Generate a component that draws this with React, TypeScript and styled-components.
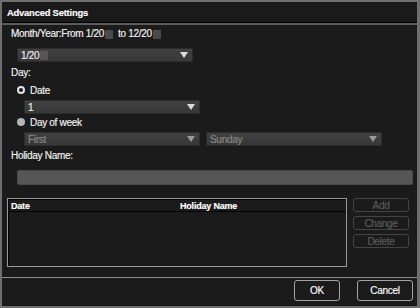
import React from "react";
import styled, { createGlobalStyle } from "styled-components";

const Global = createGlobalStyle`
  html, body { margin: 0; padding: 0; background: #1b1b1b; }
  body { font-family: "Liberation Sans", Arial, sans-serif; }
  * { box-sizing: border-box; }
`;

const Window = styled.div`
  width: 420px;
  height: 308px;
  display: flex;
  flex-direction: column;
  background: #1b1b1b;
  border-style: solid;
  border-color: #6f6f6f;
  border-width: 2px 3px 2px 2px;
  color: #f4f4f4;
  font-size: 10px;
  letter-spacing: -0.3px;
  -webkit-text-stroke: 0.15px currentColor;
`;

const TitleBar = styled.div`
  height: 21px;
  display: flex;
  align-items: center;
  padding-left: 5px;
  font-weight: bold;
  font-size: 9.4px;
  letter-spacing: -0.2px;
  color: #ffffff;
  background: #1a1a1a;
  border-bottom: 1px solid #000;
`;

const TitleRule = styled.div`
  height: 2px;
  background: #5d5d5d;
`;

const Body = styled.div`
  flex: 1;
  display: flex;
  flex-direction: column;
  padding: 0 4px 0 5px;
`;

const Label = styled.div<{ $mt: number }>`
  margin-top: ${(p) => p.$mt}px;
  padding-left: 4px;
  height: 12px;
  line-height: 12px;
  display: flex;
  align-items: center;
  white-space: pre;
`;

const Mask = styled.span<{ $tone?: string }>`
  display: inline-block;
  width: 8px;
  height: 9px;
  background: ${(p) => p.$tone || "#4a4a4a"};
  margin-left: 1px;
  -webkit-text-stroke: 0;
`;

const Select = styled.div<{ $w: number; $disabled?: boolean; $ml?: number; $mt?: number }>`
  width: ${(p) => p.$w}px;
  height: 14px;
  margin-left: ${(p) => p.$ml ?? 0}px;
  margin-top: ${(p) => p.$mt ?? 0}px;
  display: flex;
  align-items: center;
  justify-content: space-between;
  padding: 0 4px 0 3px;
  background: linear-gradient(#414141, #383838);
  border: 1px solid #2c2c2c;
  border-radius: 1px;
  color: ${(p) => (p.$disabled ? "#8a8a8a" : "#f0f0f0")};
  flex-shrink: 0;
`;

const Arrow = styled.span<{ $disabled?: boolean }>`
  width: 0;
  height: 0;
  border-left: 4px solid transparent;
  border-right: 4px solid transparent;
  border-top: 6px solid ${(p) => (p.$disabled ? "#9a9a9a" : "#dcdcdc")};
`;

const RadioRow = styled.div<{ $mt: number }>`
  margin-top: ${(p) => p.$mt}px;
  margin-left: 10px;
  height: 12px;
  display: flex;
  align-items: center;
  gap: 5px;
`;

const Radio = styled.span<{ $checked?: boolean }>`
  width: 8px;
  height: 8px;
  border-radius: 50%;
  ${(p) =>
    p.$checked
      ? "border: 2px solid #e6e6e6; background: #1b1b1b;"
      : "background: #b4b4b4;"}
`;

const Row = styled.div<{ $mt: number; $ml?: number; $gap: number }>`
  display: flex;
  margin-top: ${(p) => p.$mt}px;
  margin-left: ${(p) => p.$ml ?? 0}px;
  gap: ${(p) => p.$gap}px;
`;

const TextInput = styled.div`
  margin-top: 8px;
  margin-left: 10px;
  height: 15px;
  background: #565656;
  border: 1px solid #4a4a4a;
  border-radius: 2px;
`;

const Table = styled.div`
  width: 340px;
  height: 69px;
  border: 1px solid #9a9a9a;
  display: flex;
  flex-direction: column;
`;

const TableHead = styled.div`
  display: grid;
  grid-template-columns: 169px 1fr;
  height: 13px;
  align-items: center;
  font-weight: bold;
  font-size: 9px;
  letter-spacing: -0.2px;
  padding-left: 2px;
  border-top: 1px solid #000;
  border-left: 1px solid #000;
  border-bottom: 1px solid #000;
  color: #fff;
`;

const TableBody = styled.div`
  flex: 1;
  border-left: 1px solid #000;
`;

const SideButtons = styled.div`
  display: flex;
  flex-direction: column;
  gap: 4px;
  width: 56px;
`;

const SmallButton = styled.div`
  height: 14px;
  border: 1px solid #444;
  border-radius: 3px;
  color: #5c5c5c;
  display: flex;
  align-items: center;
  justify-content: center;
`;

const Footer = styled.div`
  margin-top: auto;
  border-top: 1px solid #8c8c8c;
  display: flex;
  justify-content: flex-end;
  gap: 17px;
  padding: 2px 4px 5px 0;
`;

const MainButton = styled.div<{ $w: number }>`
  width: ${(p) => p.$w}px;
  height: 21px;
  border: 1px solid #a4a4a4;
  border-radius: 3px;
  display: flex;
  align-items: center;
  justify-content: center;
  color: #fff;
  font-size: 10px;
`;

export default function App() {
  return (
    <>
      <Global />
      <Window>
        <TitleBar>Advanced Settings</TitleBar>
        <TitleRule />
        <Body>
          <Label $mt={3}>
            Month/Year:From 1/20<Mask />
            {"  to 12/20"}
            <Mask />
          </Label>
          <Select $w={176} $ml={10} $mt={8}>
            <span style={{ display: "flex", alignItems: "center" }}>
              1/20<Mask $tone="#555" />
            </span>
            <Arrow />
          </Select>
          <Label $mt={5}>Day:</Label>
          <RadioRow $mt={5}>
            <Radio $checked />
            <span>Date</span>
          </RadioRow>
          <Select $w={176} $ml={17} $mt={4}>
            <span>1</span>
            <Arrow />
          </Select>
          <RadioRow $mt={2}>
            <Radio />
            <span>Day of week</span>
          </RadioRow>
          <Row $mt={4} $ml={17} $gap={6}>
            <Select $w={176} $disabled>
              <span>First</span>
              <Arrow $disabled />
            </Select>
            <Select $w={176} $disabled>
              <span>Sunday</span>
              <Arrow $disabled />
            </Select>
          </Row>
          <Label $mt={4}>Holiday Name:</Label>
          <TextInput />
          <Row $mt={13} $gap={6}>
            <Table>
              <TableHead>
                <span>Date</span>
                <span>Holiday Name</span>
              </TableHead>
              <TableBody />
            </Table>
            <SideButtons>
              <SmallButton>Add</SmallButton>
              <SmallButton>Change</SmallButton>
              <SmallButton>Delete</SmallButton>
            </SideButtons>
          </Row>
        </Body>
        <Footer>
          <MainButton $w={46}>OK</MainButton>
          <MainButton $w={56}>Cancel</MainButton>
        </Footer>
      </Window>
    </>
  );
}
